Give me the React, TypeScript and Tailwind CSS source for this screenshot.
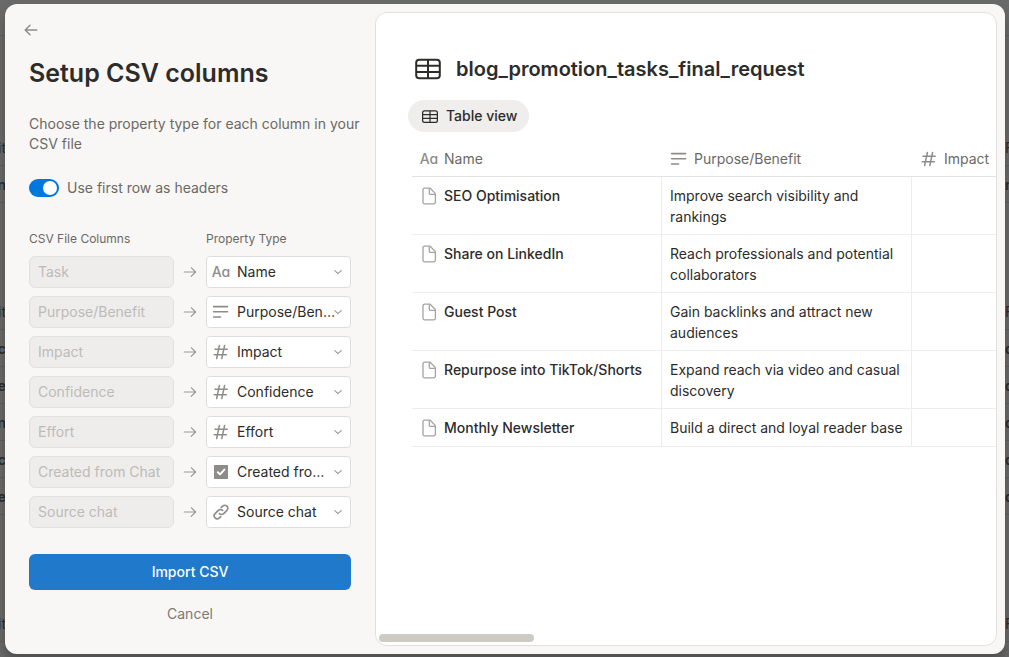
import type { ReactNode } from "react";

type PropertyKind = "title" | "text" | "number" | "checkbox" | "url";

const columns: { source: string; property: string; kind: PropertyKind }[] = [
  { source: "Task", property: "Name", kind: "title" },
  { source: "Purpose/Benefit", property: "Purpose/Benefit", kind: "text" },
  { source: "Impact", property: "Impact", kind: "number" },
  { source: "Confidence", property: "Confidence", kind: "number" },
  { source: "Effort", property: "Effort", kind: "number" },
  { source: "Created from Chat", property: "Created from Chat", kind: "checkbox" },
  { source: "Source chat", property: "Source chat", kind: "url" },
];

const rows = [
  { name: "SEO Optimisation", purpose: "Improve search visibility and rankings" },
  { name: "Share on LinkedIn", purpose: "Reach professionals and potential collaborators" },
  { name: "Guest Post", purpose: "Gain backlinks and attract new audiences" },
  { name: "Repurpose into TikTok/Shorts", purpose: "Expand reach via video and casual discovery" },
  { name: "Monthly Newsletter", purpose: "Build a direct and loyal reader base" },
];

function PropertyIcon({ kind }: { kind: PropertyKind }) {
  if (kind === "title") {
    return (
      <span
        aria-hidden="true"
        className="flex w-[18px] shrink-0 justify-center text-sm font-medium leading-4 text-[#8e8c89] [font-feature-settings:'cv11']"
      >
        Aa
      </span>
    );
  }
  return (
    <svg
      width="18"
      height="18"
      viewBox="0 0 18 18"
      fill="none"
      stroke="#8e8c89"
      strokeWidth="1.6"
      strokeLinecap="round"
      strokeLinejoin="round"
      className="shrink-0"
      aria-hidden="true"
    >
      {kind === "text" && <path d="M1.6 3.6h14M1.6 8.8h14M1.6 14h7" />}
      {kind === "number" && <path d="M7.4 2.4 4.6 15.600M12.600 2.400 9.800 15.600M3 6.200h12.200M2.200 11.800h12.200" strokeWidth="1.500" />}
      {kind === "checkbox" && (
        <>
          <rect x="2" y="2" width="14" height="14" rx="0.5" fill="#8e8c89" stroke="none" />
          <path d="m5.8 9.200 2.200 2.200 4.400-4.800" stroke="#fff" strokeWidth="2" />
        </>
      )}
      {kind === "url" && (
        <path d="M7.400 10.600a3 3 0 0 0 4.300 0l3.200-3.200a3 3 0 0 0-4.300-4.300L9.300 4.400M10.600 7.400a3 3 0 0 0-4.300 0l-3.200 3.200a3 3 0 0 0 4.300 4.300l1.300-1.300" />
      )}
    </svg>
  );
}

function TableIcon({ className }: { className: string }) {
  return (
    <svg viewBox="0 0 32 24" fill="none" stroke="#2c2c2b" strokeWidth="2" className={className} aria-hidden="true">
      <rect x="4.2" y="2.8" width="23.6" height="18.4" rx="3" />
      <path d="M4.2 8.8h23.6M4.2 15h23.6M16 2.8v18.4" />
    </svg>
  );
}

function PageIcon() {
  return (
    <svg width="18" height="18" viewBox="0 0 18 18" fill="none" stroke="#a5a3a0" strokeWidth="1.3" strokeLinejoin="round" className="shrink-0" aria-hidden="true">
      <path d="M4.6 1.2h5.6l5.2 5.4v8.6a1.6 1.6 0 0 1-1.6 1.6H4.6A1.6 1.6 0 0 1 3 15.2V2.8a1.6 1.6 0 0 1 1.600-1.600z" />
      <path d="M9.300 1.400v4.800a1.200 1.200 0 0 0 1.200 1.200h4.700" />
    </svg>
  );
}

function HeaderCell({ kind, children }: { kind: PropertyKind; children: ReactNode }) {
  return (
    <th scope="col" className="h-[34px] border-b border-[#e3e2e0] pb-0.5 pl-2 text-left font-normal text-[#6b6966]">
      <span className="flex items-center gap-1.5">
        <PropertyIcon kind={kind} />
        {children}
      </span>
    </th>
  );
}

// Dimmed page that sits behind the dialog
function BackdropRow({ left, right, strong }: { left: string; right: string; strong?: boolean }) {
  return (
    <div
      className={`flex h-[37px] shrink-0 items-center justify-between border-b border-[#5e5e5e] pt-0.5 text-sm text-[#2b2b2b] ${strong ? "font-semibold" : ""}`}
    >
      <span className="flex w-1.5 justify-end overflow-hidden">{left}</span>
      <span className="w-1 overflow-hidden">{right}</span>
    </div>
  );
}

function Backdrop() {
  return (
    <div aria-hidden="true" className="absolute inset-0 flex flex-col overflow-hidden">
      <div className="h-9 shrink-0 border-b border-[#5e5e5e]" />
      <div className="h-[93px] shrink-0" />
      <BackdropRow left="it" right="F" />
      <BackdropRow left="in" right="n" strong />
      <div className="h-[90px] shrink-0" />
      <BackdropRow left="it" right="F" />
      <BackdropRow left="c" right="d" strong />
      <BackdropRow left="e" right="d" strong />
      <BackdropRow left="in" right="d" strong />
      <BackdropRow left="c" right="d" strong />
      <BackdropRow left="e" right="d" strong />
      <div className="h-[90px] shrink-0" />
      <BackdropRow left="it" right="F" />
    </div>
  );
}

function SetupPanel() {
  return (
    <form className="flex w-[370px] shrink-0 flex-col px-6 pt-3.5" onSubmit={(e) => e.preventDefault()}>
      <button type="button" aria-label="Back" className="-ml-2.5 flex size-6 items-center justify-center">
        <svg width="14" height="14" viewBox="0 0 14 14" fill="none" stroke="#8e8c89" strokeWidth="1.4" strokeLinecap="round" strokeLinejoin="round">
          <path d="M12.800 7H1.400M6 2.200 1.200 7 6 11.800" />
        </svg>
      </button>

      <h1 className="mt-[15px] text-[25px] leading-8 font-semibold text-[#2c2c2b]">Setup CSV columns</h1>
      <p className="mt-[25px] -mr-4 text-sm text-[#6b6966]">Choose the property type for each column in your CSV file</p>

      <label className="mt-6 flex items-center gap-2 text-sm text-[#6b6966]">
        <input
          type="checkbox"
          role="switch"
          defaultChecked
          className="h-[18px] w-[30px] appearance-none rounded-full bg-[#c7c6c4] p-0.5 before:block before:size-3.5 before:rounded-full before:bg-white checked:bg-[#0077dc] checked:before:translate-x-3"
        />
        Use first row as headers
      </label>

      <div className="mt-[33px] grid grid-cols-[1fr_32px_1fr] text-xs text-[#6b6966]">
        <span>CSV File Columns</span>
        <span />
        <span>Property Type</span>
      </div>

      <div className="mt-[9px] flex flex-col gap-2">
        {columns.map((c) => (
          <div key={c.source} className="grid grid-cols-[1fr_32px_1fr] items-center">
            <input
              type="text"
              disabled
              value={c.source}
              aria-label={`CSV column ${c.source}`}
              className="h-8 min-w-0 rounded-md border border-[#e1e0de] bg-[#eeedec] px-2 pb-0.5 text-sm text-[#bdbbb8]"
            />
            <svg width="14" height="14" viewBox="0 0 14 14" fill="none" stroke="#9d9b98" strokeWidth="1.2" strokeLinecap="round" strokeLinejoin="round" className="justify-self-center" aria-hidden="true">
              <path d="M1.200 7h11.400M8.200 2.600 12.600 7l-4.400 4.400" />
            </svg>
            <div className="relative">
              <span className="pointer-events-none absolute inset-y-0 left-1.5 flex items-center">
                <PropertyIcon kind={c.kind} />
              </span>
              <select
                aria-label={`Property for ${c.source}`}
                defaultValue={c.property}
                className="h-8 w-full appearance-none overflow-hidden rounded border border-[#dfdedc] bg-white pr-3.5 pl-[30px] text-sm text-ellipsis whitespace-nowrap text-[#2c2c2b]"
              >
                {columns.map((o) => (
                  <option key={o.property}>{o.property}</option>
                ))}
              </select>
              <svg width="10" height="10" viewBox="0 0 10 10" fill="none" stroke="#9d9b98" strokeWidth="1.2" strokeLinecap="round" strokeLinejoin="round" className="pointer-events-none absolute top-[11px] right-2" aria-hidden="true">
                <path d="M1.800 3.600 5 6.600l3.200-3" />
              </svg>
            </div>
          </div>
        ))}
      </div>

      <button type="submit" className="mt-[26px] h-9 rounded-md bg-[#2079ca] text-sm font-medium text-white">
        Import CSV
      </button>
      <button type="button" className="mt-2.5 h-7 text-sm text-[#7d7a75]">
        Cancel
      </button>
    </form>
  );
}

function Preview() {
  return (
    <section className="relative my-2 mr-2 min-w-0 flex-1 overflow-hidden rounded-xl border border-[#e1e0de] bg-white pt-[42px] pl-9">
      <h2 className="flex items-center gap-3 text-xl leading-7 font-semibold text-[#2c2c2b]">
        <TableIcon className="h-6 w-8" />
        blog_promotion_tasks_final_request
      </h2>

      <button type="button" className="mt-[17px] -ml-1 flex h-8 items-center gap-1.5 rounded-full bg-[#efeeec] px-3 text-sm font-medium text-[#2c2c2b]">
        <TableIcon className="h-[15px] w-5" />
        Table view
      </button>

      <table className="mt-[11px] w-[1750px] table-fixed border-separate border-spacing-0 text-sm">
        <colgroup>
          <col className="w-[250px]" />
          <col className="w-[250px]" />
          <col />
        </colgroup>
        <thead>
          <tr>
            <HeaderCell kind="title">Name</HeaderCell>
            <HeaderCell kind="text">Purpose/Benefit</HeaderCell>
            <HeaderCell kind="number">Impact</HeaderCell>
          </tr>
        </thead>
        <tbody className="leading-[21px] text-[#2c2c2b]">
          {rows.map((r) => (
            <tr key={r.name} className="h-[38px] align-top">
              <td className="border-r border-b border-[#eeedec] px-2 pt-2 pb-[7px]">
                <span className="flex items-center gap-1.5 font-medium">
                  <PageIcon />
                  {r.name}
                </span>
              </td>
              <td className="border-r border-b border-[#eeedec] px-2 pt-2 pb-[7px]">{r.purpose}</td>
              <td className="border-b border-[#eeedec]" />
            </tr>
          ))}
        </tbody>
      </table>

      {/* Scrollbar thumb */}
      <div className="absolute bottom-[3px] left-[3px] h-2 w-1/4 rounded-full bg-[#cecbc5]" />
    </section>
  );
}

export default function App() {
  return (
    <div className="relative h-screen bg-[#696969] pt-1 pr-1 pb-[3px] pl-[5px] font-['Inter',sans-serif]">
      <Backdrop />
      <main
        role="dialog"
        aria-label="Setup CSV columns"
        className="relative flex h-full overflow-hidden rounded-xl bg-[#f8f7f5] shadow-[0_8px_12px_rgba(0,0,0,0.25)]"
      >
        <SetupPanel />
        <Preview />
      </main>
    </div>
  );
}
